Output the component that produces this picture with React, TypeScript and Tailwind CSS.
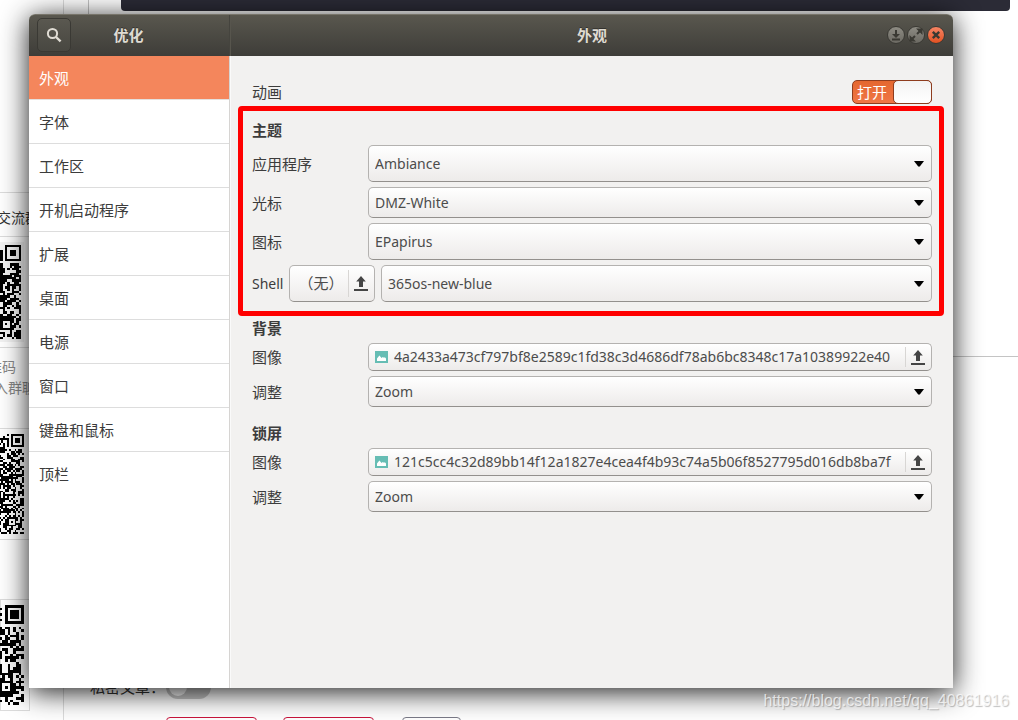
import { useState, type ReactNode } from "react"

const pages = ["外观", "字体", "工作区", "开机启动程序", "扩展", "桌面", "电源", "窗口", "键盘和鼠标", "顶栏"]

const raised =
  "rounded-[5px] border border-[#b4b2b0] border-b-[#93908d] bg-linear-to-b from-white to-[#edebea] text-[#4c4c4c]"

function inFinder(x: number, y: number, n: number) {
  const corners = [
    [0, 0],
    [n - 7, 0],
    [0, n - 7],
  ]
  for (const [cx, cy] of corners) {
    const dx = x - cx
    const dy = y - cy
    if (dx >= -1 && dx <= 7 && dy >= -1 && dy <= 7) {
      const ring = Math.max(Math.abs(dx - 3), Math.abs(dy - 3))
      return ring === 3 || ring <= 1 ? 1 : 0
    }
  }
  const ring = Math.max(Math.abs(x - (n - 7)), Math.abs(y - (n - 7)))
  if (ring <= 2) return ring === 1 ? 0 : 1
  return -1
}

function QrCode({ modules, seed, className }: { modules: number; seed: number; className: string }) {
  let d = ""
  let s = seed
  for (let y = 0; y < modules; y++) {
    for (let x = 0; x < modules; x++) {
      s = (s * 48271) % 2147483647
      const fixed = inFinder(x, y, modules)
      const on = fixed === -1 ? s / 2147483647 > 0.46 : fixed === 1
      if (on) d += `M${x} ${y}h1v1h-1z`
    }
  }
  return (
    <svg viewBox={`0 0 ${modules} ${modules}`} className={`shrink-0 ${className}`} aria-hidden="true">
      <path d={d} fill="#000" shapeRendering="crispEdges" />
    </svg>
  )
}

function BrowserPage() {
  return (
    <div className="absolute inset-0 flex overflow-hidden bg-white text-sm whitespace-nowrap">
      <div className="w-16 shrink-0 border-r border-[#dcdcdc] pt-48">
        <div className="flex h-[45px] items-center border-y border-[#dcdcdc] pt-[6px] text-[#333]">
          <span className="-ml-[3px]">交流群</span>
        </div>
        <div className="flex h-[111px] w-[30px] flex-col items-end border-b border-[#dcdcdc] pt-[5px] pr-[6px]">
          <div className="flex h-[100px] w-6 items-start justify-end bg-[#f2f2f2] pt-[3px] pr-[3px]">
            <QrCode modules={41} seed={7100} className="size-[94px]" />
          </div>
        </div>
        <div className="h-20 pt-2 leading-[21px] text-[#888]">
          <p className="-ml-3">维码</p>
          <p className="-ml-[6px]">入群聊</p>
        </div>
        <div className="flex h-28 w-[30px] items-start justify-end border-y border-[#dcdcdc] pt-[5px] pr-[6px]">
          <QrCode modules={53} seed={1900} className="size-[100px]" />
        </div>
        <div className="mt-[59px] flex h-28 w-[30px] items-start justify-end border border-[#dcdcdc] pt-[5px] pr-[5px]">
          <QrCode modules={37} seed={4300} className="size-[100px]" />
        </div>
      </div>
      <div className="flex min-w-0 flex-1 flex-col">
        <div className="ml-6 h-10 shrink-0 border-l border-[#c4c4c4] pr-2 pl-8">
          <div className="h-[11px] rounded-b bg-[#2b2b36]" />
        </div>
        <div className="mt-[316px] shrink-0 border-t border-[#c4c4c4]" />
        <div className="mt-[318px] flex shrink-0 items-center pl-[26px]">
          <span className="w-[76px] text-[15px] leading-5 text-[#333]">私密文章：</span>
          <span className="h-6 w-[45px] rounded-full bg-[#c8c8c8] p-[3px]">
            <span className="block size-[18px] rounded-full bg-white" />
          </span>
        </div>
        <div className="mt-[18px] flex shrink-0 pl-[102px]">
          <span className="h-8 w-[91px] shrink-0 rounded border border-[#c9143c]" />
          <span className="ml-[26px] h-8 w-[91px] shrink-0 rounded border border-[#c9143c]" />
          <span className="ml-7 h-8 w-[59px] shrink-0 rounded border border-[#7a7a88]" />
        </div>
      </div>
    </div>
  )
}

function UploadIcon() {
  return (
    <svg viewBox="0 0 14 15" className="h-[15px] w-[14px] shrink-0" fill="#454545" aria-hidden="true">
      <path d="M7 0l4.8 5.6H9V11H5V5.6H2.2z" />
      <path d="M0 13h14v2H0z" />
    </svg>
  )
}

function ImageIcon() {
  return (
    <svg viewBox="0 0 13 12" className="h-3 w-[13px] shrink-0" aria-hidden="true">
      <path d="M0 0h13v12H0z" fill="#66bdb4" />
      <path d="M2 10V7.4L4.4 4.6 6.6 7l1.2-1 1.2.8.9-.6L11 7.4V10z" fill="#fff" />
    </svg>
  )
}

function Row({ label, id, children }: { label: string; id: string; children: ReactNode }) {
  return (
    <div className="flex items-center">
      <label htmlFor={id} className="w-[116px] shrink-0 pt-px">
        {label}
      </label>
      {children}
    </div>
  )
}

function Select({ id, value, tall }: { id: string; value: string; tall?: boolean }) {
  return (
    <div className="relative min-w-0 flex-1">
      <select
        id={id}
        defaultValue={value}
        className={`block w-full appearance-none px-[6px] text-sm ${raised} ${tall ? "h-[37px]" : "h-[31px]"}`}
      >
        <option>{value}</option>
      </select>
      <svg
        viewBox="0 0 10 6"
        className="pointer-events-none absolute inset-y-0 right-2 my-auto h-[6px] w-[10px]"
        aria-hidden="true"
      >
        <path d="M0 0h10L6 5.2q-1 .9-2 0z" fill="#000" />
      </svg>
    </div>
  )
}

function FileButton({ id, name }: { id: string; name: string }) {
  return (
    <button id={id} type="button" className={`flex h-7 min-w-0 flex-1 items-center px-[6px] ${raised}`}>
      <ImageIcon />
      <span className="ml-[6px] min-w-0 flex-1 overflow-hidden text-left text-sm whitespace-nowrap">{name}</span>
      <span className="mr-[5px] h-5 w-px shrink-0 bg-[#d8d6d4]" />
      <UploadIcon />
    </button>
  )
}

function Heading({ children }: { children: ReactNode }) {
  return <h2 className="h-[21px] leading-[23px] font-bold">{children}</h2>
}

function WindowButton({ label, close, children }: { label: string; close?: boolean; children: ReactNode }) {
  return (
    <button
      type="button"
      aria-label={label}
      className={`flex size-[18px] items-center justify-center rounded-full border border-[#3a3934] bg-linear-to-b ${
        close ? "from-[#f58463] to-[#e2511f]" : "from-[#8d8b83] to-[#6c6a63]"
      }`}
    >
      <svg viewBox="0 0 16 16" className="size-4 shrink-0" fill="none" stroke="#3a3933" strokeWidth="2">
        {children}
      </svg>
    </button>
  )
}

function TitleBar() {
  return (
    <header className="flex h-[42px] rounded-t-md border-t border-[#77746a] bg-linear-to-b from-[#59574e] to-[#3e3d39] text-[#dfdbd2]">
      <div className="flex w-[201px] shrink-0 items-center border-r border-[#45443e] px-2 pb-px">
        <button
          type="button"
          aria-label="搜索"
          className="flex size-[34px] items-center justify-center rounded-[5px] border border-[#3a3934] bg-linear-to-b from-[#5a5850] to-[#484741]"
        >
          <svg viewBox="0 0 16 16" className="size-4" fill="none" stroke="#e0dcd4" aria-hidden="true">
            <circle cx="6.5" cy="6.5" r="4.6" strokeWidth="2" />
            <path d="M10 10l4.6 4.4" strokeWidth="2.4" />
          </svg>
        </button>
        <h1 className="mr-[35px] flex-1 text-center font-bold [text-shadow:0_-1px_0_#33322e]">优化</h1>
      </div>
      <div className="flex flex-1 items-center border-l border-[#57554d] px-2 pb-px">
        <h1 className="ml-[58px] flex-1 text-center font-bold [text-shadow:0_-1px_0_#33322e]">外观</h1>
        <div className="flex gap-[2px]">
          <WindowButton label="最小化">
            <path d="M8 3v6M4 12.5h8" />
            <path d="M4 7h8l-4 4z" fill="#3a3933" stroke="none" />
          </WindowButton>
          <WindowButton label="最大化">
            <path d="M9 7l3-3M7 9l-3 3" />
            <path d="M8 1.5h6.5V8zM1.5 8v6.5H8z" fill="#3a3933" stroke="none" />
          </WindowButton>
          <WindowButton label="关闭" close>
            <path d="M4.8 4.8l6.4 6.4M11.2 4.8l-6.4 6.4" strokeWidth="2.4" />
          </WindowButton>
        </div>
      </div>
    </header>
  )
}

export default function App() {
  const [page, setPage] = useState("外观")
  const [animations, setAnimations] = useState(true)

  return (
    <div className="relative flex min-h-screen flex-col overflow-hidden pt-[14px] pr-[65px] pb-8 pl-[29px] font-['Noto_Sans','Noto_Sans_CJK_SC',sans-serif] text-[15px] text-[#3c3c3c]">
      <BrowserPage />

      <div className="relative flex flex-1 flex-col rounded-t-md shadow-[0_4px_28px_rgba(0,0,0,0.9)]">
        <TitleBar />
        <div className="flex flex-1">
          <nav className="w-[201px] shrink-0 border-r border-[#d6d4d2] bg-white">
            {pages.map((name) => (
              <button
                key={name}
                type="button"
                onClick={() => setPage(name)}
                className={`block h-11 w-full border-b px-[10px] pt-[2px] text-left last:border-transparent ${
                  name === page ? "border-[#e4e0dd] bg-[#f4865c] bg-clip-padding text-white" : "border-[#dddddd]"
                }`}
              >
                {name}
              </button>
            ))}
          </nav>

          <main className="min-w-0 flex-1 border-l border-[#fafafa] bg-[#f2f1f0] pt-6">
            <div className="flex h-6 items-center justify-between px-[21px]">
              <label htmlFor="animations">动画</label>
              <button
                id="animations"
                type="button"
                role="switch"
                aria-checked={animations}
                onClick={() => setAnimations(!animations)}
                className="flex h-6 w-20 items-stretch rounded-[5px] border border-[#8e3c1e] bg-linear-to-b from-[#e5672f] to-[#f07746] text-white"
              >
                <span className="flex-1 pl-1 text-left leading-[22px]">打开</span>
                <span className="-my-px -mr-px w-[39px] rounded-[5px] border border-[#8e3c1e] bg-linear-to-b from-[#f3f3f3] to-white" />
              </button>
            </div>

            <section className="mt-[2px] mr-[9px] ml-[7px] flex flex-col gap-[5px] rounded border-[5px] border-[#ff0000] pt-2 pr-[7px] pb-[9px] pl-[9px]">
              <Heading>主题</Heading>
              <Row label="应用程序" id="gtk-theme">
                <Select id="gtk-theme" value="Ambiance" tall />
              </Row>
              <Row label="光标" id="cursor-theme">
                <Select id="cursor-theme" value="DMZ-White" />
              </Row>
              <Row label="图标" id="icon-theme">
                <Select id="icon-theme" value="EPapirus" tall />
              </Row>
              <div className="flex items-center">
                <label htmlFor="shell-theme" className="w-[37px] shrink-0 text-sm">
                  Shell
                </label>
                <button
                  type="button"
                  className={`mr-[6px] flex h-[37px] w-[86px] shrink-0 items-center pr-[6px] pl-2 ${raised}`}
                >
                  <span className="flex-1 text-center whitespace-nowrap">（无）</span>
                  <span className="mr-[5px] ml-1 h-[27px] w-px shrink-0 bg-[#d8d6d4]" />
                  <UploadIcon />
                </button>
                <Select id="shell-theme" value="365os-new-blue" tall />
              </div>
            </section>

            <section className="mt-px flex flex-col gap-[5px] px-[21px]">
              <Heading>背景</Heading>
              <Row label="图像" id="background-image">
                <FileButton
                  id="background-image"
                  name="4a2433a473cf797bf8e2589c1fd38c3d4686df78ab6bc8348c17a10389922e40"
                />
              </Row>
              <Row label="调整" id="background-fit">
                <Select id="background-fit" value="Zoom" />
              </Row>
            </section>

            <section className="mt-[15px] flex flex-col gap-[5px] px-[21px]">
              <Heading>锁屏</Heading>
              <Row label="图像" id="lock-image">
                <FileButton
                  id="lock-image"
                  name="121c5cc4c32d89bb14f12a1827e4cea4f4b93c74a5b06f8527795d016db8ba7f"
                />
              </Row>
              <Row label="调整" id="lock-fit">
                <Select id="lock-fit" value="Zoom" />
              </Row>
            </section>
          </main>
        </div>
      </div>

      <p className="absolute right-[9px] bottom-[7px] font-['Liberation_Sans',sans-serif] text-base text-white/70 [text-shadow:1px_1px_1px_rgba(0,0,0,0.25)]">
        https://blog.csdn.net/qq_40861916
      </p>
    </div>
  )
}
